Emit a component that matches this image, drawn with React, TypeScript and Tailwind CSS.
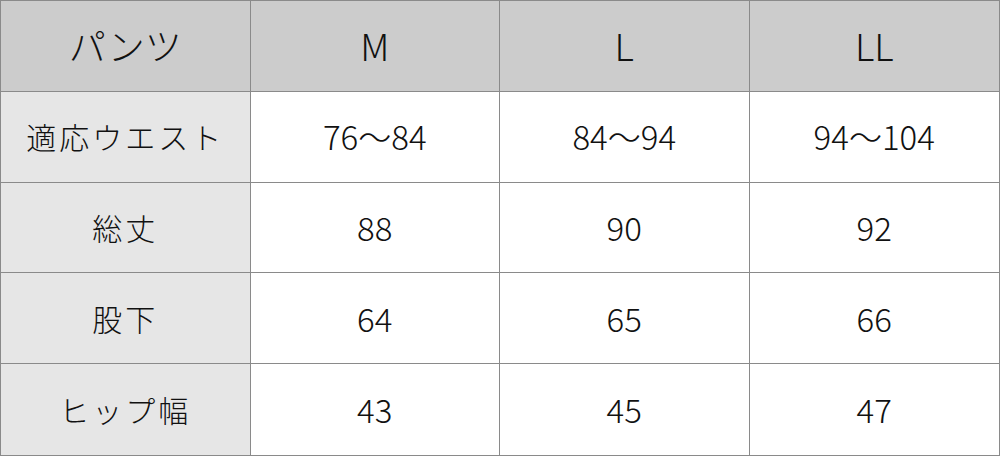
const header = ["パンツ", "M", "L", "LL"];

const rows: { label: string; values: string[] }[] = [
  { label: "適応ウエスト", values: ["76～84", "84～94", "94～104"] },
  { label: "総丈", values: ["88", "90", "92"] },
  { label: "股下", values: ["64", "65", "66"] },
  { label: "ヒップ幅", values: ["43", "45", "47"] },
];

const font = { fontFamily: '"Noto Sans CJK JP", "Noto Sans", sans-serif' };

export default function App() {
  return (
    <div className="w-[1000px] h-[456px] bg-white" style={font}>
      <div className="grid grid-cols-4 grid-rows-5 h-[456px] border border-[#8a8a8a] text-[#111] font-light">
        {header.map((h, i) => (
          <div
            key={h}
            className={`flex items-center justify-center bg-[#cccccc] border-b border-[#8a8a8a] text-[37px] ${
              i < 3 ? "border-r" : ""
            }`}
          >
            {h}
          </div>
        ))}
        {rows.map((row, r) => (
          <>
            <div
              key={row.label}
              className={`flex items-center justify-center bg-[#e6e6e6] border-r border-[#8a8a8a] text-[30px] tracking-[3px] ${
                r < rows.length - 1 ? "border-b" : ""
              }`}
            >
              {row.label}
            </div>
            {row.values.map((v, c) => (
              <div
                key={row.label + c}
                className={`flex items-center justify-center border-[#8a8a8a] text-[33px] ${
                  c < 2 ? "border-r" : ""
                } ${r < rows.length - 1 ? "border-b" : ""}`}
              >
                {v}
              </div>
            ))}
          </>
        ))}
      </div>
    </div>
  );
}
